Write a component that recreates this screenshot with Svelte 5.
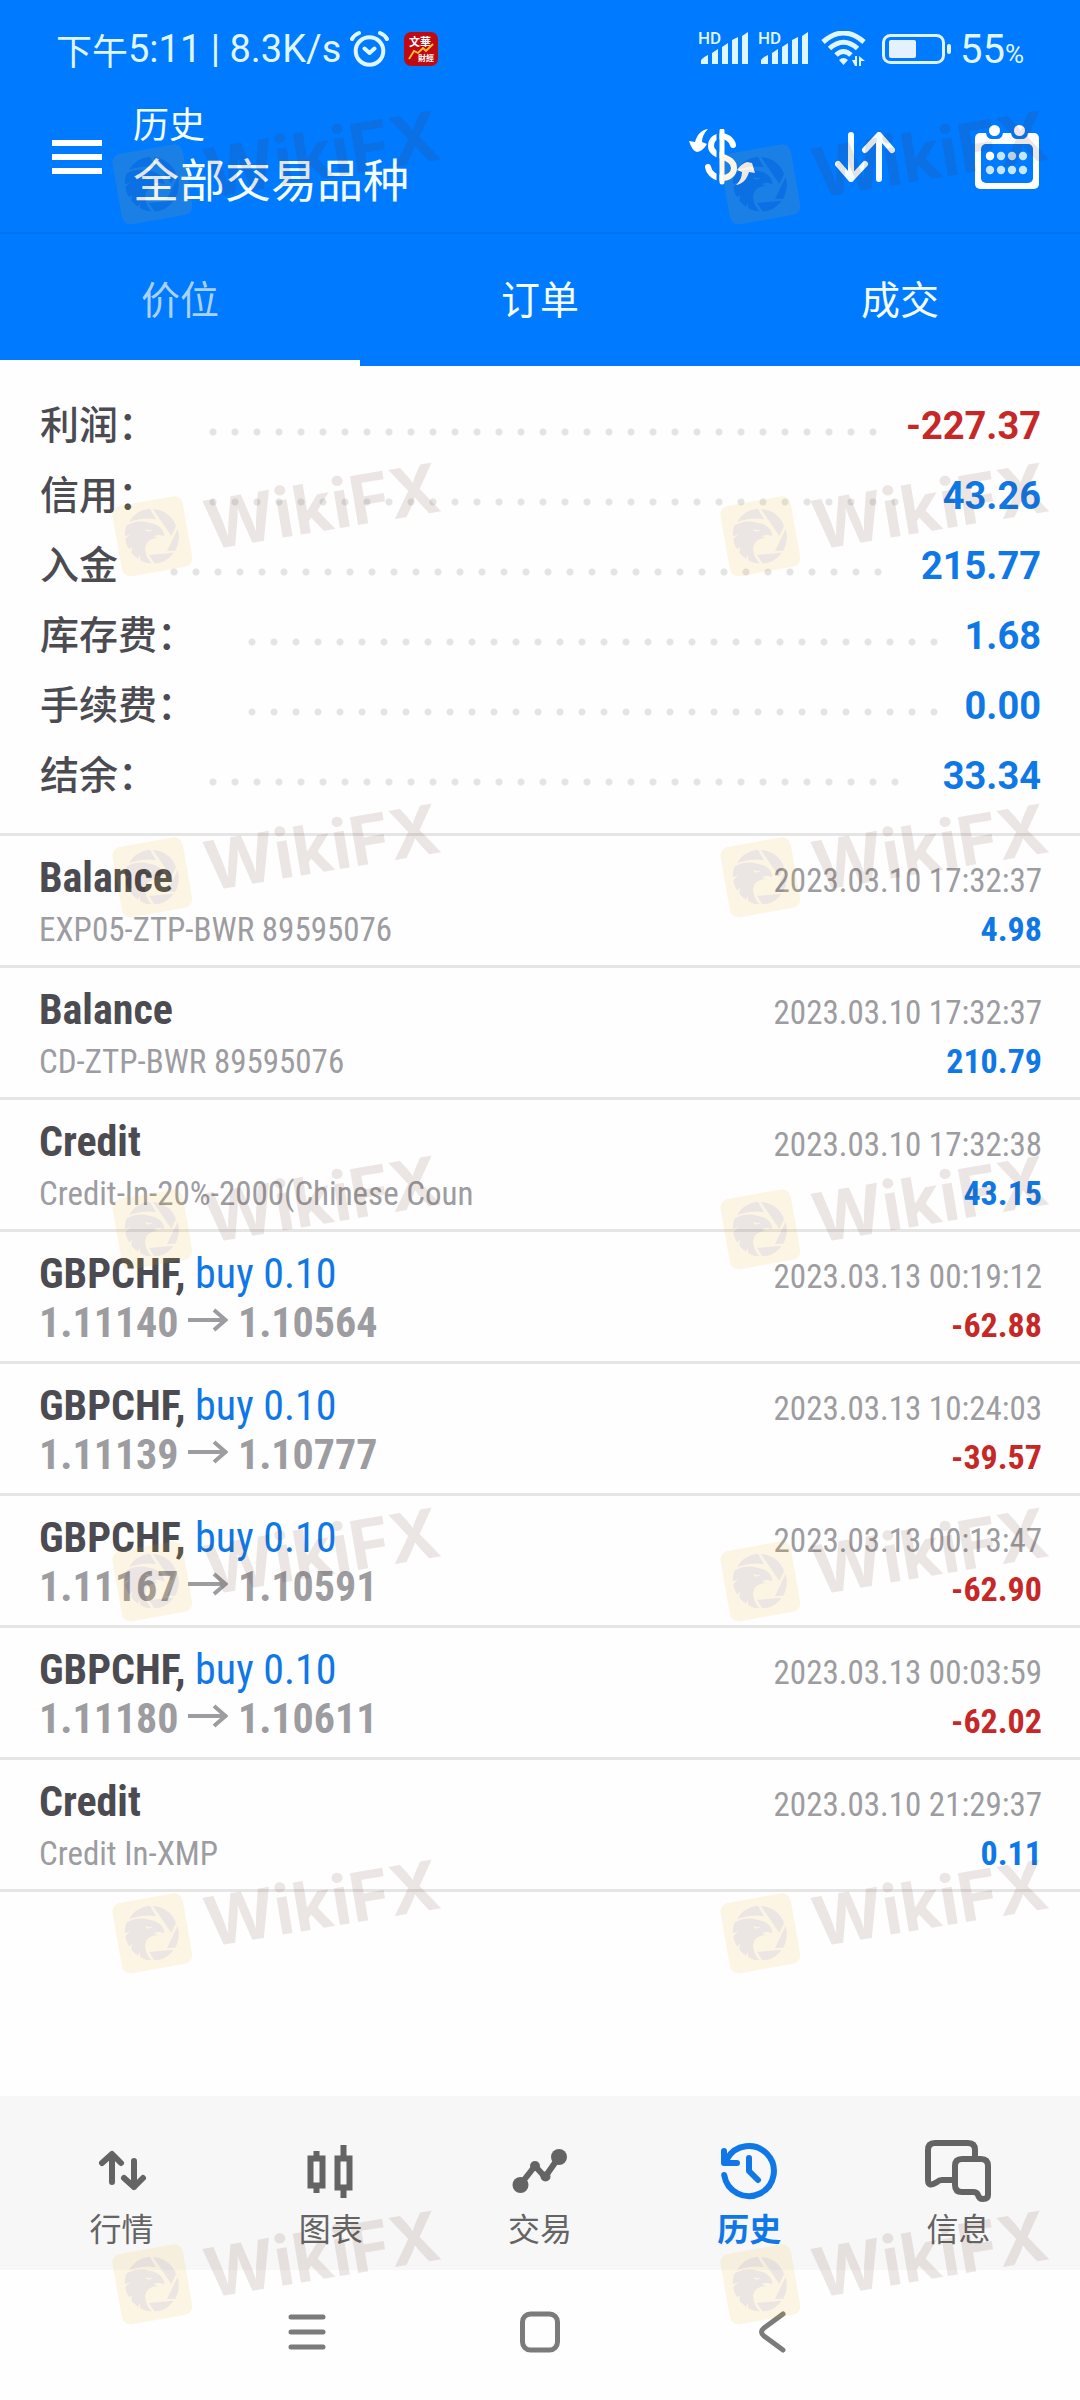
<script>
  let activeTab = $state(0);
  let activeNav = $state(3);

  const tabs = ["价位", "订单", "成交"];

  const summary = [
    { label: "利润：", value: "-227.37" },
    { label: "信用：", value: "43.26" },
    { label: "入金", value: "215.77" },
    { label: "库存费：", value: "1.68" },
    { label: "手续费：", value: "0.00" },
    { label: "结余：", value: "33.34" },
  ];

  const entries = [
    { name: "Balance", time: "2023.03.10 17:32:37", note: "EXP05-ZTP-BWR 89595076", value: "4.98" },
    { name: "Balance", time: "2023.03.10 17:32:37", note: "CD-ZTP-BWR 89595076", value: "210.79" },
    { name: "Credit", time: "2023.03.10 17:32:38", note: "Credit-In-20%-2000(Chinese Coun", value: "43.15" },
    { name: "GBPCHF,", side: "buy 0.10", time: "2023.03.13 00:19:12", open: "1.11140", close: "1.10564", value: "-62.88" },
    { name: "GBPCHF,", side: "buy 0.10", time: "2023.03.13 10:24:03", open: "1.11139", close: "1.10777", value: "-39.57" },
    { name: "GBPCHF,", side: "buy 0.10", time: "2023.03.13 00:13:47", open: "1.11167", close: "1.10591", value: "-62.90" },
    { name: "GBPCHF,", side: "buy 0.10", time: "2023.03.13 00:03:59", open: "1.11180", close: "1.10611", value: "-62.02" },
    { name: "Credit", time: "2023.03.10 21:29:37", note: "Credit In-XMP", value: "0.11" },
  ];

  const navItems = ["行情", "图表", "交易", "历史", "信息"];

  // stamps are repeated over the whole screen, two per row
  const stampRows = [138, 490, 831, 1183, 1535, 1887, 2238];
  const stampCols = [100, 708];
</script>

{#snippet signal()}
  <svg class="signal" width="50" height="34" viewBox="0 0 50 34" aria-hidden="true">
    <text x="-1" y="13">HD</text>
    <path d="M2 33V29Q4 26 9 24V33ZM13 33V22L19 18V33ZM23 33V16L29 12V33ZM33 33V9L39 6V33ZM43 33V5L49 1V33Z" />
  </svg>
{/snippet}

{#snippet stamp(x, y)}
  <svg class="stamp" style="left: {x}px; top: {y}px" width="345" height="110" viewBox="0 0 345 110">
    <g transform="scale(.3333)">
      <rect x="-107" y="-107" width="214" height="214" rx="26" fill="#f0b61c" transform="translate(157 139) rotate(-10)" />
      <g fill="#5a2513">
        <path d="M88 96C101 71 126 57 150 57L168 88C142 82 116 86 88 96Z" />
        <path d="M159 57C191 59 218 79 228 108L214 138Z" />
        <path d="M233 117C240 141 236 161 226 182L201 183Z" />
        <path d="M147 195L221 188C205 210 184 220 163 220Z" />
        <path d="M80 106C100 94 125 91 147 98C172 101 192 116 193 137C191 141 188 137 184 136C175 132 168 135 162 139L174 145C152 143 133 158 136 181C138 198 145 211 155 220C141 221 130 216 121 210L120 194L114 206C105 200 99 194 94 187L97 171L88 178C82 170 77 158 76 148L90 133L75 139C74 127 76 116 80 106Z" />
      </g>
      <path d="M137 119Q146 125 155 120" fill="none" stroke="#f0b61c" stroke-width="4" />
    </g>
    <text x="109" y="60" transform="rotate(-9.5 109 60)">WikiFX</text>
  </svg>
{/snippet}

<div class="screen">
  <header>
    <div class="status">
      <span class="clock">下午</span><span class="net">5:11 | 8.3K/s</span>
      <svg class="alarm" width="39" height="36" viewBox="0 0 39 36" aria-hidden="true">
        <circle cx="19.5" cy="20" r="13.8" />
        <path d="M2 8Q4 4 9 2M37 8Q35 4 30 2M14.5 17.5L19.5 22L24.5 17.5" />
      </svg>
      <svg width="34" height="34" viewBox="0 0 34 34" aria-hidden="true">
        <rect width="34" height="34" rx="7" fill="#c00a12" />
        <text class="badge" x="5" y="14">文華</text>
        <text class="badge small" x="14" y="29">財經</text>
        <path d="M5 27L10 19L14 21L19 16L22 19L29 12" fill="none" stroke="#ffc42e" stroke-width="1.8" />
      </svg>
      <span class="spacer"></span>
      <div class="radios">
        {@render signal()}
        {@render signal()}
        <svg class="wifi" width="48" height="36" viewBox="0 0 48 36" aria-hidden="true">
          <path d="M2 11Q22.500 -7 43 11M8.500 17.500Q22.500 5 36.500 17.500M15 24Q22.500 17 30 24" />
          <path class="solid" d="M18 29Q22.500 25 27 29L22.500 34ZM31 29H34V25H36V35H34ZM38 35V25L44 30H40V35Z" />
        </svg>
      </div>
      <svg class="battery" width="70" height="30" viewBox="0 0 70 30" aria-hidden="true">
        <rect x="1.5" y="1.5" width="60" height="27" rx="7" fill="none" stroke="#dff2ff" stroke-width="3" />
        <rect x="7" y="6" width="27" height="18" rx="2" fill="#e6f1ff" />
        <rect x="65" y="10" width="4" height="10" rx="2" fill="#dff2ff" />
      </svg>
      <span class="level">55<small>%</small></span>
    </div>

    <div class="appbar">
      <button class="menu" aria-label="菜单">
        <svg width="50" height="34" viewBox="0 0 50 34"><path d="M0 0H50V6H0ZM0 14H50V20H0ZM0 28H50V34H0Z" fill="#fff" /></svg>
      </button>
      <div class="titles">
        <p>历史</p>
        <h1>全部交易品种</h1>
      </div>
      <button aria-label="交易品种">
        <svg width="66" height="56" viewBox="0 0 66 56">
          <path d="M44 16C41 4 22 4 22 17C22 29 45 26 45 39C45 52 22 53 19 38" fill="none" stroke="#fff" stroke-width="6" stroke-linecap="round" />
          <path d="M29 2V54" stroke="#007aff" stroke-width="3" />
          <path d="M33 2V53" stroke="#fff" stroke-width="5" stroke-linecap="round" />
          <path d="M19 0C15 4 13 8 13 13L18 15Q14 22 8 23Q3 22 0 12L6 13C8 6 12 1 19 0ZM47 56C51 52 53 48 53 43L48 41Q52 35 58 33L63 34L66 44L60 43C58 50 54 55 47 56Z" fill="#fff" />
        </svg>
      </button>
      <button aria-label="排序">
        <svg class="line" width="60" height="50" viewBox="0 0 60 50">
          <path d="M16 3V47M3 32L16 47L30 32M44 47V3M30 18L44 3L57 18" />
        </svg>
      </button>
      <button aria-label="日期">
        <svg width="64" height="64" viewBox="0 0 64 64">
          <rect y="8" width="64" height="56" rx="5" fill="#fff" />
          <rect x="6" y="19" width="52" height="39" rx="5" fill="#007aff" />
          <path d="M11 8H28Q27 14 22 14H17Q12 14 11 8ZM36 8H53Q52 14 47 14H42Q37 14 36 8Z" fill="#007aff" />
          <circle cx="19.500" cy="5.500" r="5.500" fill="#fff" />
          <circle cx="44.500" cy="5.500" r="5.500" fill="#fff" />
          {#each [31, 45] as cy}
            {#each [15, 26, 37, 48] as cx}
              <circle {cx} {cy} r="4.2" fill="#c4e6ff" />
            {/each}
          {/each}
          <circle cx="15" cy="31" r="4.2" fill="#fff" />
        </svg>
      </button>
    </div>

    <div class="tabs" role="tablist">
      {#each tabs as tab, i}
        <button role="tab" aria-selected={activeTab === i} class:active={activeTab === i} onclick={() => (activeTab = i)}>{tab}</button>
      {/each}
    </div>
  </header>

  <main>
    <dl>
      {#each summary as row}
        <div class="total">
          <dt>{row.label}</dt>
          <span class="leader"><i></i></span>
          <dd class:loss={row.value.startsWith("-")}>{row.value}</dd>
        </div>
      {/each}
    </dl>

    <ul>
      {#each entries as entry}
        <li>
          <div class="row">
            <h2>{entry.name}{#if entry.side}{" "}<span>{entry.side}</span>{/if}</h2>
            <time>{entry.time}</time>
          </div>
          <div class="row">
            {#if entry.open}
              <p class="price">
                {entry.open}
                <svg width="40" height="34" viewBox="0 0 40 34" role="img" aria-label="至"><path d="M0 17H37M26 7L37.500 17L26 27" /></svg>
                {entry.close}
              </p>
            {:else}
              <p class="note">{entry.note}</p>
            {/if}
            <strong class:loss={entry.value.startsWith("-")}>{entry.value}</strong>
          </div>
        </li>
      {/each}
    </ul>
  </main>

  <nav class="bottom">
    {#each navItems as item, i}
      <button class:current={activeNav === i} onclick={() => (activeNav = i)}>
        <svg width="68" height="64" viewBox="0 0 68 64" aria-hidden="true">
          {#if i === 0}
            <path d="M24 43V16M14 24L24 15L33 24M46 22V48M36 39L46 48L55 39" />
          {:else if i === 1}
            <path d="M13.500 19.500H25.500V46.500H13.500ZM19.500 19V12M19.500 47V54M40.500 19.500H52.500V48.500H40.500ZM46.500 19V6M46.500 49V59" style:stroke-linecap="butt" style:stroke-linejoin="miter" />
          {:else if i === 2}
            <path d="M14 46L29 27L39 38L53 18" />
            <g class="dots">
              <circle cx="14.500" cy="46" r="8" />
              <circle cx="29" cy="27" r="5" />
              <circle cx="39.500" cy="37.500" r="5" />
              <circle cx="53" cy="18" r="8" />
            </g>
          {:else if i === 3}
            <path d="M9.200 36A25 25 0 1 0 12 20M9 12V24H22M34 19V32L43 41" />
          {:else}
            <path d="M29 41H18Q15 41 13 43Q4 49 4 41V11Q4 4 11 4H44Q51 4 51 11V19" />
            <path d="M38 20H57Q64 20 64 27V56Q64 60 59 60Q55 60 54 56Q53 53 49 53H38Q31 53 31 46V27Q31 20 38 20Z" />
          {/if}
        </svg>
        {item}
      </button>
    {/each}
  </nav>

  <div class="system">
    <button aria-label="最近任务">
      <svg width="40" height="42" viewBox="0 0 40 42"><path d="M4 6H36M4 21H36M4 36H36" /></svg>
    </button>
    <button aria-label="主屏幕">
      <svg width="40" height="42" viewBox="0 0 40 42"><rect x="2.500" y="3" width="35" height="36" rx="8" /></svg>
    </button>
    <button aria-label="返回">
      <svg width="40" height="42" viewBox="0 0 40 42"><path d="M30 3L11 17Q6 21 11 25L30 39" /></svg>
    </button>
  </div>

  <div class="stamps" aria-hidden="true">
    {#each stampRows as y}
      {#each stampCols as x}
        {@render stamp(x, y)}
      {/each}
    {/each}
  </div>
</div>

<style>
  :global(body) {
    margin: 0;
    background: #fefefe;
  }

  .screen {
    position: relative;
    display: flex;
    flex-direction: column;
    min-height: 100vh;
    background: #fefefe;
    color: #4b4b51;
    font-family: Roboto, "Noto Sans CJK SC", sans-serif;
  }

  button {
    padding: 0;
    border: 0;
    background: none;
    color: inherit;
    font: inherit;
    cursor: pointer;
  }

  svg {
    display: block;
  }

  h1, h2, p, dl, dd, ul {
    margin: 0;
    padding: 0;
  }

  header {
    background: #007aff;
    color: #f4fdff;
  }

  /* status bar */
  .status {
    display: flex;
    align-items: center;
    height: 98px;
    padding: 0 56px;
    color: #dff6ff;
    white-space: nowrap;
  }

  .clock {
    font-size: 36px;
  }

  .net {
    font-size: 38px;
  }

  .alarm {
    margin: 0 15px 0 9px;
    fill: none;
    stroke: #dff6ff;
    stroke-width: 4;
    stroke-linecap: round;
    stroke-linejoin: round;
  }

  .badge {
    fill: #fff;
    font-size: 11px;
    font-weight: 700;
  }

  .badge.small {
    font-size: 8px;
  }

  .spacer {
    flex: 1;
  }

  .radios {
    display: flex;
    gap: 10px;
  }

  .signal {
    overflow: visible;
    fill: #dff6ff;
    font-size: 17px;
    font-weight: 500;
  }

  .wifi {
    margin-left: 2px;
    fill: none;
    stroke: #dff6ff;
    stroke-width: 5;
  }

  .wifi .solid {
    fill: #dff6ff;
    stroke: none;
  }

  .battery {
    margin: 0 8px 0 13px;
  }

  .level {
    font-size: 40px;
  }

  .level small {
    font-size: 26px;
  }

  /* app bar */
  .appbar {
    display: flex;
    align-items: center;
    gap: 80px;
    height: 118px;
    padding: 0 41px 16px 52px;
    border-bottom: 2px solid #0070ee;
  }

  .menu {
    margin-right: -49px;
  }

  .titles {
    flex: 1;
  }

  .titles p {
    font-size: 36px;
    line-height: 48px;
  }

  h1 {
    font-size: 46px;
    font-weight: 400;
    line-height: 62px;
  }

  .line {
    fill: none;
    stroke: #f4fdff;
    stroke-width: 6;
    stroke-linecap: round;
    stroke-linejoin: round;
  }

  .tabs {
    display: grid;
    grid-template-columns: repeat(3, 1fr);
    height: 132px;
  }

  .tabs button {
    border-bottom: 6px solid transparent;
    font-size: 39px;
  }

  .tabs .active {
    border-color: #fefefe;
    color: #a9d2fb;
  }

  /* totals */
  main {
    flex: 1;
  }

  dl {
    padding: 24px 39px 23px 40px;
  }

  .total {
    display: flex;
    align-items: center;
    height: 70px;
  }

  dt {
    padding-bottom: 6px;
    font-size: 39px;
    font-weight: 500;
  }

  .leader {
    flex: 1;
    margin: 14px 17px 0 45px;
  }

  .leader i {
    display: block;
    width: round(down, 100%, 22px);
    height: 8px;
    background: radial-gradient(circle at center, #e4e4e4 3px, transparent 4px) 0 0 / 22px 8px repeat-x;
  }

  dd {
    padding-top: 2px;
    color: #0f78e6;
    font-size: 38px;
    font-weight: 700;
  }

  /* deals */
  ul {
    list-style: none;
  }

  li {
    padding: 18px 38px 9px 39px;
    border-top: 3px solid #e5e5e5;
    font-family: "Roboto Condensed", "Liberation Sans Narrow", Roboto, sans-serif;
  }

  li:last-child {
    border-bottom: 3px solid #e5e5e5;
  }

  .row {
    display: flex;
    align-items: baseline;
    justify-content: space-between;
    white-space: nowrap;
  }

  h2 {
    font-size: 42px;
    font-weight: 700;
    line-height: 48px;
  }

  h2 span {
    color: #0f78e6;
    font-weight: 400;
  }

  time, .note {
    color: #9c9ca1;
    font-size: 33px;
  }

  time {
    line-height: 40px;
  }

  .note, .price {
    line-height: 48px;
  }

  .price {
    color: #9c9ca1;
    font-size: 42px;
    font-weight: 700;
  }

  .price svg {
    display: inline-block;
    fill: none;
    stroke: #9c9ca1;
    stroke-width: 4;
  }

  strong {
    color: #0f78e6;
    font-size: 34px;
    line-height: 54px;
  }

  .total .loss, .row .loss {
    color: #c62828;
  }

  /* bottom navigation */
  .bottom {
    display: grid;
    grid-template-columns: repeat(5, 1fr);
    height: 174px;
    padding: 0 17px;
    background: #f7f7f7;
    color: #646464;
  }

  .bottom button {
    display: flex;
    flex-direction: column;
    align-items: center;
    padding-top: 43px;
    font-size: 32px;
    line-height: 54px;
  }

  .bottom svg {
    fill: none;
    stroke: currentColor;
    stroke-width: 6;
    stroke-linecap: round;
    stroke-linejoin: round;
  }

  .dots {
    fill: currentColor;
    stroke: none;
  }

  .bottom .current {
    color: #0f78e6;
    font-weight: 700;
  }

  .system {
    display: flex;
    align-items: center;
    justify-content: center;
    gap: 193px;
    height: 124px;
    padding-bottom: 6px;
  }

  .system svg {
    fill: none;
    stroke: #7b7b7b;
    stroke-width: 5;
    stroke-linecap: round;
  }

  /* watermark */
  .stamps {
    position: absolute;
    inset: 0;
    overflow: hidden;
    pointer-events: none;
  }

  .stamp {
    position: absolute;
    overflow: visible;
    opacity: 0.11;
  }

  .stamp text {
    fill: #5a2513;
    font-family: Inter, sans-serif;
    font-size: 68px;
    font-weight: 700;
  }
</style>
